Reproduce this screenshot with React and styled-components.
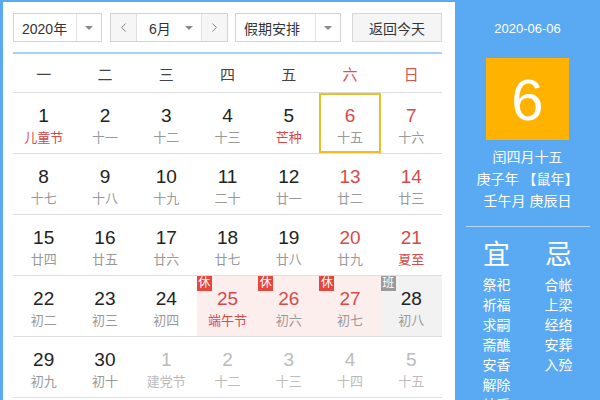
import React from "react";
import styled, { createGlobalStyle } from "styled-components";
import { ChevronLeft, ChevronRight } from "lucide-react";

const GlobalStyle = createGlobalStyle`
  html, body {
    margin: 0;
    padding: 0;
    overflow: hidden;
  }
  body {
    font-family: "Liberation Sans", "Noto Sans CJK SC", Arial, sans-serif;
  }
`;

const Frame = styled.div`
  width: 600px;
  height: 400px;
  background: #5aa9f3;
  display: flex;
  padding: 2px 0 0 3px;
  box-sizing: border-box;
  overflow: hidden;
`;

const Main = styled.div`
  width: 452px;
  flex-shrink: 0;
  background: #fff;
  padding: 11px 13px 0 10px;
  box-sizing: border-box;
`;

const Toolbar = styled.div`
  display: flex;
  align-items: center;
  height: 29px;
  padding-bottom: 10px;
  border-bottom: 2px solid #a9d0f2;
`;

const Select = styled.div`
  display: flex;
  align-items: stretch;
  width: ${(p) => p.w}px;
  height: 29px;
  margin-right: ${(p) => p.mr || 0}px;
  border: 1px solid #d3d3d3;
  box-sizing: border-box;
  background: #fff;
  font-size: 14px;
  color: #333;
`;

const SelectText = styled.span`
  flex: 1;
  display: flex;
  align-items: center;
  padding-left: ${(p) => p.pl || 8}px;
`;

const Caret = styled.span`
  width: 24px;
  display: flex;
  align-items: center;
  justify-content: center;
  border-left: ${(p) => (p.plain ? "none" : "1px solid #e2e2e2")};
  &::after {
    content: "";
    border-left: 4px solid transparent;
    border-right: 4px solid transparent;
    border-top: 4px solid #888;
  }
`;

const Arrow = styled.span`
  width: 25px;
  display: flex;
  align-items: center;
  justify-content: center;
  background: #f6f6f6;
  color: #777;
  border-${(p) => (p.side === "left" ? "right" : "left")}: 1px solid #e0e0e0;
`;

const Button = styled.div`
  width: 90px;
  height: 29px;
  margin-left: auto;
  border: 1px solid #d8d8d8;
  box-sizing: border-box;
  background: #f5f5f5;
  display: flex;
  align-items: center;
  justify-content: center;
  font-size: 14px;
  color: #333;
`;

const Grid = styled.div`
  display: grid;
  grid-template-columns: repeat(7, 1fr);
`;

const WeekHead = styled.div`
  height: 38px;
  display: flex;
  align-items: center;
  justify-content: center;
  font-size: 15px;
  color: ${(p) => (p.weekend ? "#d9534f" : "#444")};
  border-bottom: 1px solid #dedede;
`;

const Cell = styled.div`
  position: relative;
  height: 60px;
  border-bottom: 1px solid #dedede;
  display: flex;
  flex-direction: column;
  align-items: center;
  background: ${(p) =>
    p.tag === "休" ? "#fdeeee" : p.tag === "班" ? "#f2f2f2" : "transparent"};
  box-shadow: ${(p) => (p.selected ? "inset 0 0 0 2px #f0bd2a" : "none")};
`;

const DayNum = styled.div`
  margin-top: 11px;
  font-size: 19px;
  line-height: 24px;
  color: ${(p) => (p.other ? "#bbb" : p.red ? "#d64a4a" : "#222")};
`;

const Lunar = styled.div`
  margin-top: 2px;
  font-size: 13px;
  line-height: 16px;
  color: ${(p) => (p.other ? "#bbb" : p.red ? "#d64a4a" : "#999")};
`;

const Badge = styled.span`
  position: absolute;
  top: 0;
  left: 0;
  width: 15px;
  height: 15px;
  font-size: 12px;
  line-height: 15px;
  text-align: center;
  color: #fff;
  background: ${(p) => (p.type === "休" ? "#e5473f" : "#999")};
`;

const Side = styled.div`
  flex: 1;
  display: flex;
  flex-direction: column;
  align-items: center;
  padding-top: 19px;
  color: #fff;
  & > * {
    flex-shrink: 0;
  }
`;

const SideDate = styled.div`
  font-size: 13px;
  line-height: 16px;
  width: 145px;
  text-align: center;
`;

const BigDay = styled.div`
  margin-top: 21px;
  width: 83px;
  height: 82px;
  background: #ffb300;
  display: flex;
  align-items: center;
  justify-content: center;
  font-size: 58px;
  color: #fff;
`;

const LunarInfo = styled.div`
  margin-top: 6px;
  font-size: 14px;
  line-height: 22px;
  text-align: center;
  white-space: nowrap;
`;

const Divider = styled.div`
  width: 124px;
  height: 1px;
  margin-top: 14px;
  background: rgba(255, 255, 255, 0.55);
`;

const YiJi = styled.div`
  display: grid;
  grid-template-columns: 32px 32px;
  column-gap: 30px;
  margin-top: 11px;
`;

const YiCol = styled.div`
  display: flex;
  flex-direction: column;
  align-items: center;
`;

const YiTitle = styled.div`
  font-size: 27px;
  line-height: 34px;
  margin-bottom: 3px;
`;

const YiItem = styled.div`
  font-size: 14px;
  line-height: 20px;
`;

const weekdays = ["一", "二", "三", "四", "五", "六", "日"];

const rows = [
  [
    { d: 1, l: "儿童节", lr: true },
    { d: 2, l: "十一" },
    { d: 3, l: "十二" },
    { d: 4, l: "十三" },
    { d: 5, l: "芒种", lr: true },
    { d: 6, l: "十五", selected: true },
    { d: 7, l: "十六" },
  ],
  [
    { d: 8, l: "十七" },
    { d: 9, l: "十八" },
    { d: 10, l: "十九" },
    { d: 11, l: "二十" },
    { d: 12, l: "廿一" },
    { d: 13, l: "廿二" },
    { d: 14, l: "廿三" },
  ],
  [
    { d: 15, l: "廿四" },
    { d: 16, l: "廿五" },
    { d: 17, l: "廿六" },
    { d: 18, l: "廿七" },
    { d: 19, l: "廿八" },
    { d: 20, l: "廿九" },
    { d: 21, l: "夏至", lr: true },
  ],
  [
    { d: 22, l: "初二" },
    { d: 23, l: "初三" },
    { d: 24, l: "初四" },
    { d: 25, l: "端午节", lr: true, tag: "休", red: true },
    { d: 26, l: "初六", tag: "休", red: true },
    { d: 27, l: "初七", tag: "休", red: true },
    { d: 28, l: "初八", tag: "班", red: false },
  ],
  [
    { d: 29, l: "初九" },
    { d: 30, l: "初十" },
    { d: 1, l: "建党节", other: true },
    { d: 2, l: "十二", other: true },
    { d: 3, l: "十三", other: true },
    { d: 4, l: "十四", other: true },
    { d: 5, l: "十五", other: true },
  ],
];

const yi = ["祭祀", "祈福", "求嗣", "斋醮", "安香", "解除", "纳采"];
const ji = ["合帐", "上梁", "经络", "安葬", "入殓"];

export default function App() {
  return (
    <>
      <GlobalStyle />
      <Frame>
        <Main>
          <Toolbar>
            <Select w={89} mr={8}>
              <SelectText>2020年</SelectText>
              <Caret />
            </Select>
            <Select w={118} mr={7}>
              <Arrow side="left">
                <ChevronLeft size={15} strokeWidth={1.5} />
              </Arrow>
              <SelectText pl={12}>6月</SelectText>
              <Caret plain />
              <Arrow side="right">
                <ChevronRight size={15} strokeWidth={1.5} />
              </Arrow>
            </Select>
            <Select w={106}>
              <SelectText>假期安排</SelectText>
              <Caret />
            </Select>
            <Button>返回今天</Button>
          </Toolbar>
          <Grid>
            {weekdays.map((w, i) => (
              <WeekHead key={w} weekend={i >= 5}>
                {w}
              </WeekHead>
            ))}
            {rows.flat().map((c, i) => {
              const col = i % 7;
              const red = c.red !== undefined ? c.red : col >= 5;
              return (
                <Cell key={i} tag={c.tag} selected={c.selected}>
                  {c.tag && <Badge type={c.tag}>{c.tag}</Badge>}
                  <DayNum red={red} other={c.other}>
                    {c.d}
                  </DayNum>
                  <Lunar red={c.lr} other={c.other}>
                    {c.l}
                  </Lunar>
                </Cell>
              );
            })}
          </Grid>
        </Main>
        <Side>
          <SideDate>2020-06-06</SideDate>
          <BigDay>6</BigDay>
          <LunarInfo>
            闰四月十五
            <br />
            庚子年 【鼠年】
            <br />
            壬午月 庚辰日
          </LunarInfo>
          <Divider />
          <YiJi>
            <YiCol>
              <YiTitle>宜</YiTitle>
              {yi.map((t) => (
                <YiItem key={t}>{t}</YiItem>
              ))}
            </YiCol>
            <YiCol>
              <YiTitle>忌</YiTitle>
              {ji.map((t) => (
                <YiItem key={t}>{t}</YiItem>
              ))}
            </YiCol>
          </YiJi>
        </Side>
      </Frame>
    </>
  );
}
